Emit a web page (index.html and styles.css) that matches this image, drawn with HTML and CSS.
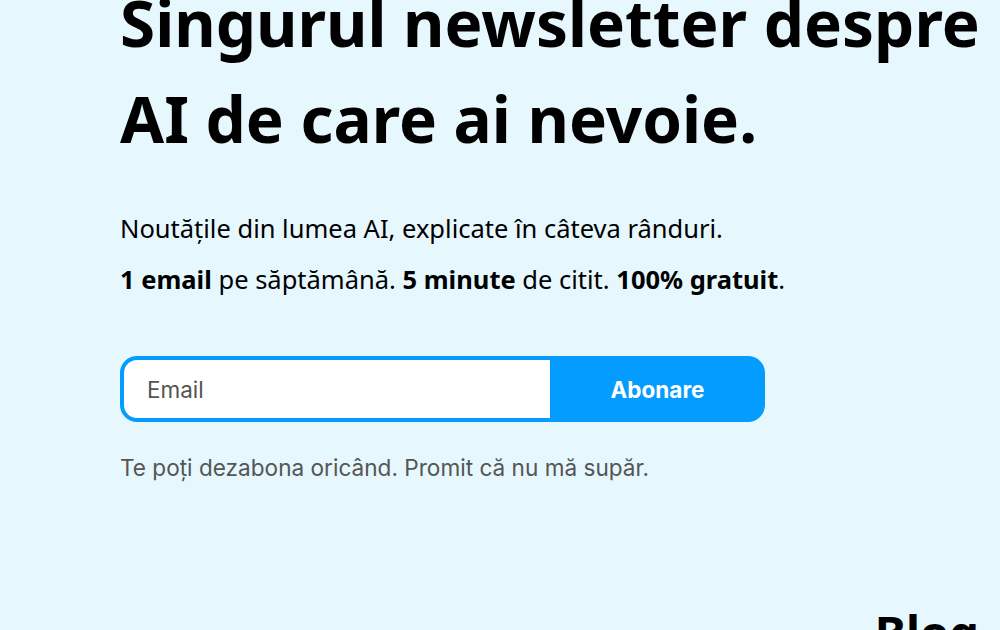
FILE: index.html
```html
<!DOCTYPE html>
<html lang="ro">
<head>
<meta charset="utf-8">
<title>Newsletter AI</title>
<link rel="stylesheet" href="styles.css">
</head>
<body>
<main class="page">
  <section class="hero">
    <h1 class="title">Singurul newsletter despre AI de care ai nevoie.</h1>
    <p class="lead">Noutățile din lumea AI, explicate în câteva rânduri.</p>
    <p class="lead"><strong>1 email</strong> pe săptămână. <strong>5 minute</strong> de citit. <strong>100% gratuit</strong>.</p>
    <form class="signup">
      <input class="signup-input" type="email" placeholder="Email">
      <button class="signup-button" type="button">Abonare</button>
    </form>
    <p class="note">Te poți dezabona oricând. Promit că nu mă supăr.</p>
  </section>
  <section class="blog">
    <h2 class="blog-title">Blog</h2>
  </section>
</main>
</body>
</html>
```
FILE: styles.css
```css
html, body {
  margin: 0;
  padding: 0;
  background: #e6f7fe;
  overflow: hidden;
}
body {
  font-family: "Noto Sans", sans-serif;
  color: #000;
}
.page {
  width: 860px;
  padding-left: 120px;
  margin-top: -25px;
}
.title {
  font-size: 63.8px;
  line-height: 96px;
  font-weight: 700;
  margin: 0 -20px 0 0;
}
.lead {
  font-size: 25.5px;
  line-height: 36px;
  margin: 0;
}
.title + .lead {
  margin-top: 43px;
}
.lead + .lead {
  margin-top: 15px;
}
.lead strong {
  font-weight: 700;
}
.signup {
  display: flex;
  width: 645px;
  height: 66px;
  box-sizing: border-box;
  margin-top: 59px;
  padding: 4px 0 4px 4px;
  background: #049cfe;
  border-radius: 17px;
}
.signup-input {
  flex: 1;
  min-width: 0;
  border: none;
  outline: none;
  border-radius: 13px 0 0 13px;
  background: #fff;
  padding: 0 23px;
  font-family: "Inter", sans-serif;
  font-size: 22.5px;
  color: #222;
}
.signup-input::placeholder {
  color: #555;
}
.signup-button {
  width: 215px;
  border: none;
  background: transparent;
  color: #fff;
  font-family: "Inter", sans-serif;
  font-size: 22.5px;
  font-weight: 700;
  cursor: pointer;
}
.note {
  margin: 30px 0 0;
  font-family: "Inter", sans-serif;
  font-size: 22.6px;
  line-height: 32px;
  color: #555;
}
.blog {
  display: flex;
  justify-content: flex-end;
  margin-top: 116px;
}
.blog-title {
  margin: 0 1px 0 0;
  font-size: 47px;
  line-height: 64px;
  font-weight: 700;
}
```
